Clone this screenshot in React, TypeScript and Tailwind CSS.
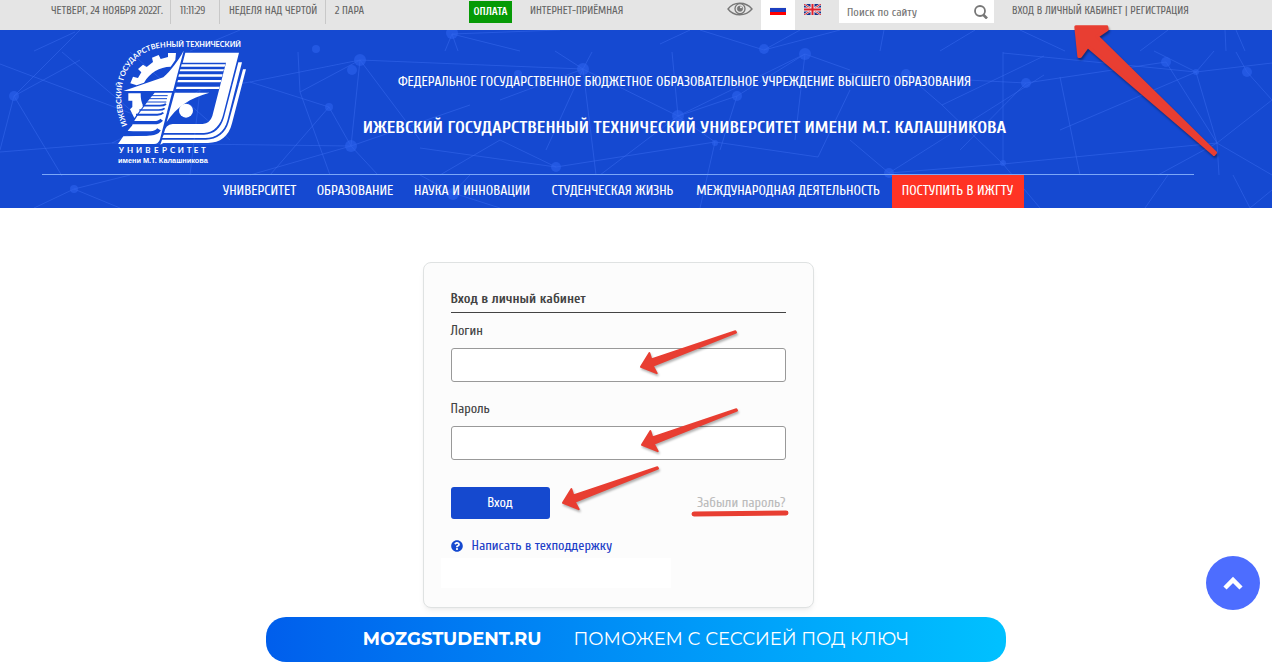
import { useState } from 'react';
import { FaQuestionCircle } from 'react-icons/fa';

const menu = [
  { title: 'УНИВЕРСИТЕТ', width: 'w-[94px]' },
  { title: 'ОБРАЗОВАНИЕ', width: 'w-[97px]' },
  { title: 'НАУКА И ИННОВАЦИИ', width: 'w-[137px]' },
  { title: 'СТУДЕНЧЕСКАЯ ЖИЗНЬ', width: 'w-[144px]' },
  { title: 'МЕЖДУНАРОДНАЯ ДЕЯТЕЛЬНОСТЬ', width: 'w-[207px]' },
];

// [x1, y1, x2, y2] от верхнего края шапки
const lines = [
  [0, 34, 154, 92], [14, 66, 80, 30], [14, 66, 0, 120], [14, 66, 62, 146], [0, 122, 112, 113],
  [112, 113, 351, 116], [62, 22, 140, 88], [80, 0, 14, 66], [75, 2, 34, 21], [240, 0, 190, 21],
  [250, 52, 360, 30], [360, 30, 583, 39], [360, 30, 351, 116], [360, 30, 300, 62], [360, 30, 420, 110],
  [329, 77, 250, 52], [329, 77, 270, 145], [329, 77, 351, 116], [351, 116, 250, 145], [351, 116, 378, 145],
  [351, 116, 470, 75], [300, 62, 330, 145], [300, 62, 298, 22], [74, 159, 130, 145], [74, 159, 34, 178],
  [74, 159, 120, 178], [452, 4, 445, 21], [452, 4, 520, 21], [452, 4, 560, 0], [452, 4, 458, 21],
  [555, 21, 583, 39], [583, 39, 592, 22], [583, 39, 678, 86], [583, 39, 500, 70], [583, 39, 596, 145],
  [583, 39, 546, 120], [678, 86, 805, 24], [678, 86, 715, 112], [678, 86, 600, 145], [678, 86, 672, 22],
  [805, 24, 795, 110], [805, 24, 737, 66], [805, 24, 850, 40], [737, 66, 720, 120], [737, 66, 678, 86],
  [715, 112, 818, 127], [715, 112, 556, 137], [715, 112, 700, 178], [556, 137, 420, 118], [556, 137, 500, 110],
  [500, 110, 440, 145], [764, 20, 700, 0], [764, 20, 800, 0], [764, 20, 840, 0], [660, 14, 690, 0],
  [818, 127, 850, 60], [850, 44, 1026, 53], [906, 44, 942, 75], [942, 75, 1003, 134], [942, 75, 1044, 26],
  [1003, 22, 1003, 134], [1003, 134, 889, 143], [1003, 134, 1217, 113], [889, 143, 1044, 45], [1026, 53, 1166, 32],
  [1003, 23, 1196, 42], [1196, 42, 1272, 33], [1196, 42, 1217, 113], [1196, 42, 1154, 21], [1196, 42, 1214, 21],
  [1196, 42, 1060, 100], [1166, 32, 1217, 113], [1247, 42, 1272, 70], [1247, 42, 1236, 22], [1217, 113, 1272, 70],
  [1217, 113, 1272, 145], [1217, 113, 1219, 145], [1217, 113, 1158, 145], [1003, 134, 1040, 178], [889, 143, 850, 110],
  [1060, 47, 1080, 145], [1026, 53, 960, 120], [940, 21, 975, 0], [1020, 0, 1065, 21], [1140, 21, 1168, 0],
  [1236, 0, 1245, 21], [1225, 0, 1226, 21], [880, 21, 884, 0], [1233, 145, 1250, 178], [1250, 178, 1272, 160],
  [1145, 178, 1168, 145], [453, 163, 470, 145], [453, 163, 420, 145], [453, 163, 500, 178], [130, 22, 230, 110],
  [200, 60, 190, 145], [200, 60, 250, 52], [154, 92, 200, 60], [154, 92, 112, 113],
];

// [cx, cy, r]
const dots = [
  [14, 66, 5], [360, 30, 6], [352, 40, 5], [329, 77, 4], [351, 116, 6], [316, 19, 4], [74, 159, 4],
  [452, 3, 6], [583, 39, 6], [678, 86, 6], [680, 94, 5], [737, 66, 5], [556, 137, 5], [805, 24, 6],
  [764, 19, 5], [518, 44, 4], [906, 44, 5], [1026, 53, 5], [1166, 32, 5], [1247, 42, 5], [889, 143, 5],
  [453, 164, 6], [715, 113, 3], [1196, 42, 3], [1003, 133, 3],
];

function Network() {
  return (
    <svg className="absolute top-0 left-0 h-[178px] w-[1272px]" viewBox="0 0 1272 178" aria-hidden="true">
      <g stroke="#3a6cf0" strokeOpacity="0.5">
        {lines.map(([x1, y1, x2, y2], i) => (
          <line key={i} x1={x1} y1={y1} x2={x2} y2={y2} />
        ))}
      </g>
      <g fill="#2d62ec" fillOpacity="0.6">
        {dots.map(([cx, cy, r], i) => (
          <circle key={i} cx={cx} cy={cy} r={r} />
        ))}
      </g>
    </svg>
  );
}

function Logo() {
  return (
    <svg className="h-[125px] w-[132px] overflow-visible" viewBox="345 120 396 375" fill="#fff" role="img" aria-label="ИжГТУ">
      <defs>
        <path id="logo-arc" d="M382 376 C338 275 372 146 500 142 L760 142" />
      </defs>
      <text className="font-['Lato',sans-serif] font-bold" fontSize="22">
        <textPath href="#logo-arc">ИЖЕВСКИЙ ГОСУДАРСТВЕННЫЙ ТЕХНИЧЕСКИЙ</textPath>
      </text>
      {/* шестерня */}
      <path d="M391 250 L399 230 L414 234 L424 217 L414 207 L429 194 L440 201 L459 186 L456 173 L476 165 L482 177 L504 171 L504 159 L528 159 L526 180 L512 200 C478 201 450 217 432 248 L410 256 Z" />
      <path d="M385 280 H422 C422 296 424 308 430 318 L403 354 L390 328 L397 321 V302 H385 Z" />
      <path d="M551 152 L519 273 H370 L490 232 C512 212 534 184 551 152 Z" />
      {/* левая страница */}
      <path d="M464 278 H516 L480 418 Q476 432 462 432 H354 L370 409 L450 407 L383 392 L396 377 L403 362 L412 348 L422 334 L432 320 L440 308 L448 298 Z" />
      <g fill="none" stroke="#1549d1">
        <path strokeWidth="3" d="M454 287 H503 M446 296 H501 M438 306 H499" />
        <path strokeWidth="5" d="M428 317 H480 Q492 317 498 312 M418 330 H476 Q488 330 494 325" />
        <path strokeWidth="6" d="M408 344 H472 Q484 344 490 338" />
        <path strokeWidth="10" d="M398 368 H462 Q478 368 485 359" />
        <path strokeWidth="13" d="M372 400 H452 Q470 399 477 388" />
      </g>
      {/* правая страница */}
      <path d="M556 158 H717 L670 342 C663 374 642 398 612 399 H492 Q496 374 518 372 H608 Q630 370 637 348 L678 188 H548 Z" />
      <path d="M545 193 H676 L674 200 H543 Z M541 208 H672 L670 214 H539 Z M537 223 H668 L666 230 H535 Z M534 240 H664 L662 247 H532 Z M530 260 H659 L657 267 H528 Z" />
      <path d="M524 278 H628 C570 294 530 320 500 366 Z" />
      <circle cx="558" cy="332" r="21" />
      <path d="M715 187 H726 L682 362 C674 394 648 414 615 414 H487 L491 404 H612 C642 404 663 384 672 352 Z" />
      <path d="M729 208 H738 L696 370 C686 410 660 429 624 429 H490 L481 434 L486 419 H618 C650 419 677 400 686 366 Z" />
      <text
        className="font-['Lato',sans-serif] font-bold"
        fontSize="24"
        x="356 381 408 436 462 486 510 533 560 581 603"
        y="459"
      >
        УНИВЕРСИТЕТ
      </text>
      <text className="font-['Liberation_Sans',sans-serif] font-bold" fontSize="22" x="354" y="488">
        имени М.Т. Калашникова
      </text>
    </svg>
  );
}

function Arrow({ className }: { className: string }) {
  return (
    <svg
      className={`pointer-events-none absolute h-[47px] w-[100px] drop-shadow-[1px_2px_1px_rgba(0,0,0,0.3)] ${className}`}
      viewBox="670 222 300 140"
      aria-hidden="true"
    >
      <path
        d="M679 335 L704 294 L710 313 L962 228 L964 232 L714 332 L726 354 Z"
        fill="#e83e32"
        stroke="#e83e32"
        strokeWidth="6"
        strokeLinejoin="round"
      />
    </svg>
  );
}

function EyeIcon() {
  return (
    <svg className="h-[14px] w-[26px]" viewBox="0 0 78 42" fill="none" stroke="#777" aria-hidden="true">
      <path strokeWidth="4" d="M3 21 C20 -2 56 -2 75 21 C56 44 20 44 3 21 Z" />
      <circle cx="39" cy="20" r="15" strokeWidth="4" />
      <circle cx="39" cy="20" r="8" fill="#777" strokeWidth="2" />
      <circle cx="42" cy="16" r="3" fill="#eee" stroke="none" />
    </svg>
  );
}

function SearchIcon() {
  return (
    <svg className="size-[14px]" viewBox="0 0 14 14" fill="none" stroke="#777" aria-hidden="true">
      <circle cx="6" cy="6" r="5" strokeWidth="1.8" />
      <path strokeWidth="2.6" d="M9 9.5 L13 13.5" />
    </svg>
  );
}

function TopBar() {
  return (
    <div className="h-[30px] bg-[#e5e5e5] pr-9 text-[11px] leading-[22px] text-[#666]">
      <div className="mx-auto flex max-w-[1152px] whitespace-nowrap">
        <div className="h-6 w-[129px] shrink-0 border-r border-[#c8c8c8] pl-[9px]">ЧЕТВЕРГ, 24 НОЯБРЯ 2022Г.</div>
        <div className="h-6 w-[49px] shrink-0 border-r border-[#c8c8c8] pl-[9px]">11:11:29</div>
        <div className="h-6 w-[106px] shrink-0 border-r border-[#c8c8c8] pl-[9px]">НЕДЕЛЯ НАД ЧЕРТОЙ</div>
        <div className="w-[143px] shrink-0 pl-[9px]">2 ПАРА</div>
        <a href="#pay" className="mt-px h-[22px] w-[43px] shrink-0 bg-[#069a06] text-center font-bold text-white">
          ОПЛАТА
        </a>
        <a href="#reception" className="ml-[18px] w-[197px] shrink-0">ИНТЕРНЕТ-ПРИЁМНАЯ</a>
        <button type="button" aria-label="Версия для слабовидящих" className="flex w-[34px] shrink-0 pt-[2px]">
          <EyeIcon />
        </button>
        <a href="#ru" aria-label="Русский" className="flex h-[30px] w-[34px] shrink-0 justify-center bg-white pt-[7px]">
          <svg className="h-2 w-4" viewBox="0 0 16 8">
            <path fill="#f4f4f4" d="M0 0h16v1H0z" />
            <path fill="#1c3fc0" d="M0 1h16v4H0z" />
            <path fill="#f00" d="M0 5h16v3H0z" />
          </svg>
        </a>
        <a href="#en" aria-label="English" className="flex w-[44px] shrink-0 pt-1 pl-[9px]">
          <svg className="h-[11px] w-[17px]" viewBox="0 0 34 22">
            <path fill="#14328c" d="M0 0h34v22H0z" />
            <path stroke="#eee" strokeWidth="4" d="M0 0l34 22M34 0L0 22" />
            <path stroke="#d81e2c" strokeWidth="2" d="M0 0l34 22M34 0L0 22" />
            <path stroke="#eee" strokeWidth="8" d="M17 0v22M0 11h34" />
            <path stroke="#e0202c" strokeWidth="4" d="M17 0v22M0 11h34" />
          </svg>
        </a>
        <form className="flex h-[23px] w-[155px] shrink-0 items-center bg-white" onSubmit={(e) => e.preventDefault()}>
          <input
            type="text"
            aria-label="Поиск по сайту"
            placeholder="Поиск по сайту"
            className="w-full min-w-0 pl-2 text-[12px] text-[#666] outline-none placeholder:text-[#777]"
          />
          <button type="submit" aria-label="Найти" className="px-[6px]">
            <SearchIcon />
          </button>
        </form>
        <div className="ml-[18px]">
          <a href="#login">ВХОД В ЛИЧНЫЙ КАБИНЕТ</a> | <a href="#register">РЕГИСТРАЦИЯ</a>
        </div>
      </div>
    </div>
  );
}

function Header() {
  return (
    <header className="relative bg-[#1549d1] pr-9 text-white">
      <div className="absolute inset-0 overflow-hidden">
        <Network />
      </div>
      <div className="relative mx-auto max-w-[1152px]">
        <div className="flex h-[145px] border-b border-[#7ba7f7] pt-[10px] pl-[73px]">
          <a href="#home" className="shrink-0">
            <Logo />
          </a>
          <div className="flex grow flex-col items-center pt-8 pr-[72px] whitespace-nowrap">
            <p className="text-[14px] leading-5">
              ФЕДЕРАЛЬНОЕ ГОСУДАРСТВЕННОЕ БЮДЖЕТНОЕ ОБРАЗОВАТЕЛЬНОЕ УЧРЕЖДЕНИЕ ВЫСШЕГО ОБРАЗОВАНИЯ
            </p>
            <h1 className="mt-6 text-[18px] leading-6 font-bold">
              ИЖЕВСКИЙ ГОСУДАРСТВЕННЫЙ ТЕХНИЧЕСКИЙ УНИВЕРСИТЕТ ИМЕНИ М.Т. КАЛАШНИКОВА
            </h1>
          </div>
        </div>
        <nav className="flex justify-center text-center text-[14px] leading-8 font-medium whitespace-nowrap">
          {menu.map((item) => (
            <a key={item.title} href="#menu" className={`shrink-0 ${item.width}`}>
              {item.title}
            </a>
          ))}
          <a href="#apply" className="h-[33px] w-[132px] shrink-0 bg-[#ff3324]">
            ПОСТУПИТЬ В ИЖГТУ
          </a>
        </nav>
      </div>
    </header>
  );
}

function LoginForm() {
  const [login, setLogin] = useState('');
  const [password, setPassword] = useState('');

  return (
    <form
      onSubmit={(e) => e.preventDefault()}
      className="mx-auto w-[391px] rounded-lg border border-[#dfe2e2] bg-[#fcfcfc] px-[27px] pt-[26px] pb-[19px] text-[14px] leading-5 text-[#444] shadow-md shadow-black/5"
    >
      <h2 className="border-b border-[#444] pb-[3px] font-bold">Вход в личный кабинет</h2>
      <div className="relative mt-2">
        <label htmlFor="login">Логин</label>
        <input
          id="login"
          type="text"
          value={login}
          onChange={(e) => setLogin(e.target.value)}
          className="mt-[7px] block h-[34px] w-full rounded-[3px] border border-[#999] bg-white px-2"
        />
        <Arrow className="top-2 left-[187px]" />
      </div>
      <div className="relative mt-[17px]">
        <label htmlFor="password">Пароль</label>
        <input
          id="password"
          type="password"
          value={password}
          onChange={(e) => setPassword(e.target.value)}
          className="mt-[7px] block h-[34px] w-full rounded-[3px] border border-[#999] bg-white px-2"
        />
        <Arrow className="top-2 left-[188px]" />
      </div>
      <div className="relative mt-[27px] flex items-center justify-between">
        <button type="submit" className="h-8 w-[99px] rounded-[3px] bg-[#1549cf] text-white">
          Вход
        </button>
        <Arrow className="-top-[22px] left-[109px]" />
        <a href="#forgot" className="text-[#bbb]">
          Забыли пароль?
        </a>
        <svg className="absolute -right-[3px] top-[22px] h-2 w-[98px]" viewBox="0 0 98 8" aria-hidden="true">
          <path d="M3 5 L95 4" stroke="#e83e32" strokeWidth="5" strokeLinecap="round" />
        </svg>
      </div>
      <a href="#support" className="mt-[17px] flex items-center text-[#1d40c8]">
        <FaQuestionCircle size={12} className="mr-[9px] text-[#1549cf]" />
        Написать в техподдержку
      </a>
      <div className="mt-[2px] -ml-[10px] h-[30px] w-[230px] bg-white" />
    </form>
  );
}

export default function App() {
  return (
    <div className="relative min-h-screen overflow-hidden bg-white font-['Cuprum','Roboto_Condensed','Roboto',sans-serif]">
      <TopBar />
      <Header />
      <main className="pt-[54px] pr-9">
        <LoginForm />
      </main>
      <a
        href="#mozgstudent"
        className="mx-auto mt-[9px] flex h-[45px] max-w-[740px] items-center justify-center gap-8 rounded-[20px] bg-linear-to-r from-[#005eec] to-[#00c1ff] font-['Montserrat','Inter',sans-serif] text-[18px] whitespace-nowrap text-white"
      >
        <span className="font-bold">MOZGSTUDENT.RU</span>
        <span>ПОМОЖЕМ С СЕССИЕЙ ПОД КЛЮЧ</span>
      </a>
      <button
        type="button"
        aria-label="Наверх"
        className="fixed right-3 bottom-[60px] flex size-[54px] items-center justify-center rounded-full bg-[#4d6dff] text-white"
      >
        <svg className="h-[14px] w-5" viewBox="0 0 20 14" fill="none" aria-hidden="true">
          <path d="M2 12 L10 4 L18 12" stroke="currentColor" strokeWidth="4.5" />
        </svg>
      </button>
      <svg
        className="pointer-events-none absolute top-[23px] right-[52px] h-[135px] w-[147px] drop-shadow-[1px_2px_1px_rgba(0,0,0,0.4)]"
        viewBox="670 68 441 405"
        aria-hidden="true"
      >
        <path
          d="M679 80 L771 80 L772 88 L742 108 L1097 457 L1093 462 L714 138 L692 168 L688 168 Z"
          fill="#e83e32"
          stroke="#e83e32"
          strokeWidth="10"
          strokeLinejoin="round"
        />
      </svg>
    </div>
  );
}
